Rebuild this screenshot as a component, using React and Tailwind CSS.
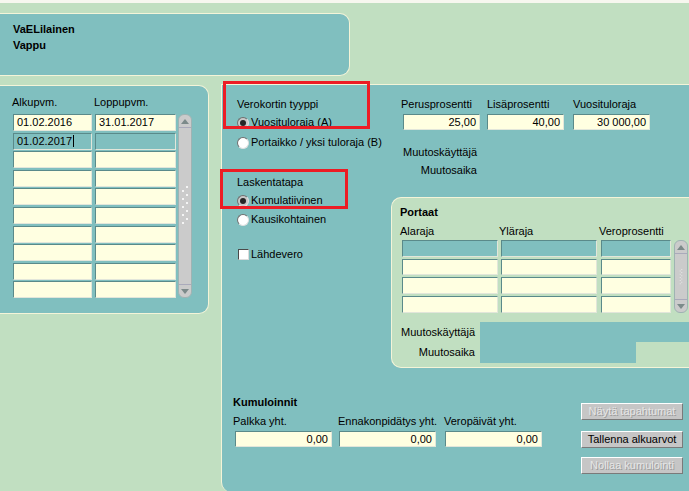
import React from 'react';

const PANEL = 'bg-[#80bfbf]';

function Field({ value = '', teal = false, right = false, cursor = false, className = '' }) {
  return (
    <div
      className={`flex items-center px-[3px] border border-t-[#5a8a8a] border-l-[#5a8a8a] border-r-[#e2e6da] border-b-[#e2e6da] overflow-hidden whitespace-nowrap ${
        teal ? 'bg-[#80bfbf]' : 'bg-[#ffffe1]'
      } ${right ? 'justify-end' : ''} ${className}`}
    >
      {value}
      {cursor && <span className="inline-block w-px h-[12px] bg-black ml-[1px]" />}
    </div>
  );
}

function Scrollbar({ className = '', grip = 'h-[40px]' }) {
  return (
    <div className={`flex flex-col rounded-[6px] bg-[#cbcbcb] border border-[#9fb3b3] overflow-hidden ${className}`}>
      <div className="h-[13px] flex items-center justify-center border-b border-[#aab]">
        <svg width="8" height="5" viewBox="0 0 8 5">
          <polygon points="0,5 8,5 4,0" fill="#7c8a8a" />
        </svg>
      </div>
      <div className="flex-1 flex items-center justify-center">
        <svg width="8" viewBox="0 0 8 40" className={grip}>
          {[0, 8, 16, 24, 32].map((y) => (
            <g key={y}>
              <rect x="5" y={y} width="2" height="2" fill="#f4f4f4" />
              <rect x="1" y={y + 4} width="2" height="2" fill="#f4f4f4" />
            </g>
          ))}
        </svg>
      </div>
      <div className="h-[13px] flex items-center justify-center border-t border-[#aab]">
        <svg width="8" height="5" viewBox="0 0 8 5">
          <polygon points="0,0 8,0 4,5" fill="#7c8a8a" />
        </svg>
      </div>
    </div>
  );
}

function Radio({ checked, label, className = '' }) {
  return (
    <div className={`h-[13px] flex items-center ${className}`}>
      <span
        className={`w-[12px] h-[12px] rounded-full border border-t-[#6f6f6f] border-l-[#6f6f6f] border-r-[#e0e0e0] border-b-[#e0e0e0] flex items-center justify-center ${
          checked ? 'bg-[#c8c8c8]' : 'bg-white'
        }`}
      >
        {checked && <span className="w-[6px] h-[6px] rounded-full bg-[#262626]" />}
      </span>
      <span className="ml-[2px]">{label}</span>
    </div>
  );
}

function Button({ children, disabled }) {
  return (
    <div
      className={`w-[102px] h-[17px] bg-[#c6c6c6] border border-t-white border-l-white border-r-[#7a7a7a] border-b-[#7a7a7a] flex items-center justify-center whitespace-nowrap ${
        disabled ? 'text-[#e6e6e6] [text-shadow:1px_1px_0_#9a9a9a]' : 'text-black'
      }`}
    >
      {children}
    </div>
  );
}

export default function App() {
  const leftRows = Array.from({ length: 10 });
  return (
    <div className="relative w-[689px] h-[491px] overflow-hidden bg-[#c1dfc1] text-black text-[11px] leading-[13px] font-['Liberation_Sans',Arial,sans-serif]">
      <div className="h-[3px] bg-[#f7f7ef]" />

      {/* header */}
      <div className={`mt-[10px] h-[63px] w-[350px] ${PANEL} border-y border-r border-[#f4f4d8] rounded-r-[10px] pl-[13px] pt-[7px] font-bold leading-[16px]`}>
        <div>VaELilainen</div>
        <div>Vappu</div>
      </div>

      <div className="mt-[8px] flex items-start">
        {/* dates panel */}
        <div className={`mt-[1px] w-[209px] h-[229px] ${PANEL} border-y border-r border-[#f4f4d8] rounded-r-[10px] pt-[10px]`}>
          <div className="flex pl-[12px]">
            <div className="w-[82px]">Alkupvm.</div>
            <div>Loppupvm.</div>
          </div>
          <div className="mt-[5px] ml-[13px] flex">
            <div className="flex flex-col gap-[1.6px] w-[79px]">
              {leftRows.map((_, i) => (
                <Field
                  key={i}
                  className="h-[17px]"
                  value={i === 0 ? '01.02.2016' : i === 1 ? '01.02.2017' : ''}
                  teal={i === 1}
                  cursor={i === 1}
                />
              ))}
            </div>
            <div className="ml-[3px] flex flex-col gap-[1.6px] w-[81px]">
              {leftRows.map((_, i) => (
                <Field key={i} className="h-[17px]" value={i === 0 ? '31.01.2017' : ''} teal={i === 1} />
              ))}
            </div>
            <Scrollbar className="ml-[2px] w-[14px] h-[184px]" />
          </div>
        </div>

        {/* main panel */}
        <div className={`ml-[12px] flex-1 h-[408px] ${PANEL} border-t border-l border-[#f4f4d8] rounded-bl-[10px] flex flex-col`}>
          <div className="flex">
            <div className="w-[169px] pl-[15px] pt-[13px] flex flex-col whitespace-nowrap">
              <div className="h-[13px]">Verokortin tyyppi</div>
              <Radio checked label="Vuosituloraja (A)" className="mt-[5px]" />
              <Radio label="Portaikko / yksi tuloraja (B)" className="mt-[7px]" />
              <div className="h-[13px] mt-[27px]">Laskentatapa</div>
              <Radio checked label="Kumulatiivinen" className="mt-[5px]" />
              <Radio label="Kausikohtainen" className="mt-[6px]" />
              <div className="h-[13px] mt-[22px] flex items-center">
                <span className="ml-[1px] w-[11px] h-[11px] bg-white border border-t-[#4a4a4a] border-l-[#4a4a4a] border-r-[#dcdcdc] border-b-[#dcdcdc]" />
                <span className="ml-[2px]">Lähdevero</span>
              </div>
            </div>

            <div className="flex-1 flex flex-col">
              <div className="pl-[10px] pt-[13px]">
                <div className="flex">
                  {[
                    ['Perusprosentti', '25,00', 'ml-[2px]'],
                    ['Lisäprosentti', '40,00', ''],
                    ['Vuosituloraja', '30 000,00', ''],
                  ].map(([label, value, off]) => (
                    <div key={label} className="w-[86px]">
                      <div className="h-[13px] whitespace-nowrap">{label}</div>
                      <Field value={value} right className={`mt-[3px] h-[16px] w-[77px] ${off}`} />
                    </div>
                  ))}
                </div>
                <div className="mt-[16px] w-[76px] text-right">Muutoskäyttäjä</div>
                <div className="mt-[5px] w-[76px] text-right">Muutosaika</div>
              </div>

              {/* Portaat */}
              <div className="mt-[20px] h-[171px] bg-[#c1dfc1] border-y border-l border-[#f4f4d8] rounded-l-[10px] pl-[8px] pt-[8px]">
                <div className="h-[13px] font-bold">Portaat</div>
                <div className="mt-[6px] flex h-[13px]">
                  <div className="w-[99px]">Alaraja</div>
                  <div className="w-[100px]">Yläraja</div>
                  <div>Veroprosentti</div>
                </div>
                <div className="mt-[2px] ml-[2px] flex">
                  {[96, 96, 70].map((w, c) => (
                    <div key={c} className={`flex flex-col gap-[2px] ${c === 0 ? 'w-[96px]' : c === 1 ? 'ml-[3px] w-[96px]' : 'ml-[4px] w-[70px]'}`}>
                      {[0, 1, 2, 3].map((r) => (
                        <Field key={r} className="h-[16.7px]" teal={r === 0} />
                      ))}
                    </div>
                  ))}
                  <Scrollbar className="ml-[3px] w-[14px] h-[73px]" grip="h-[16px]" />
                </div>
                <div className="mt-[9px] -ml-[8px] flex items-center">
                  <div className="w-[83px] text-right pr-[0px]">Muutoskäyttäjä</div>
                  <div className="ml-[5px] flex-1 h-[20px] bg-[#80bfbf]" />
                </div>
                <div className="-ml-[8px] flex items-center">
                  <div className="w-[83px] text-right">Muutosaika</div>
                  <div className="ml-[5px] w-[156px] h-[21px] bg-[#80bfbf]" />
                </div>
              </div>
            </div>
          </div>

          {/* Kumuloinnit */}
          <div className="flex">
            <div className="pl-[11px] pt-[28px]">
              <div className="h-[13px] font-bold">Kumuloinnit</div>
              <div className="mt-[6px] flex">
                {[
                  ['Palkka yht.', 'w-[105px]', 'ml-[2px]'],
                  ['Ennakonpidätys yht.', 'w-[106px]', 'ml-[1px]'],
                  ['Veropäivät yht.', 'w-[106px]', 'ml-[1px]'],
                ].map(([label, w, off]) => (
                  <div key={label} className={w}>
                    <div className="h-[13px] whitespace-nowrap">{label}</div>
                    <Field value="0,00" right className={`mt-[3px] h-[16px] w-[97px] ${off}`} />
                  </div>
                ))}
              </div>
            </div>
            <div className="ml-auto mr-[6px] pt-[35px] flex flex-col">
              <Button disabled>Näytä tapahtumat</Button>
              <div className="mt-[11px]">
                <Button>Tallenna alkuarvot</Button>
              </div>
              <div className="mt-[9px]">
                <Button disabled>Nollaa kumulointi</Button>
              </div>
            </div>
          </div>
        </div>
      </div>

      {/* red annotation boxes */}
      <div className="absolute left-[223px] top-[81px] w-[147px] h-[48px] border-[3px] border-[#ec1c24]" />
      <div className="absolute left-[220px] top-[169px] w-[128px] h-[40px] border-[3px] border-[#ec1c24]" />
    </div>
  );
}
